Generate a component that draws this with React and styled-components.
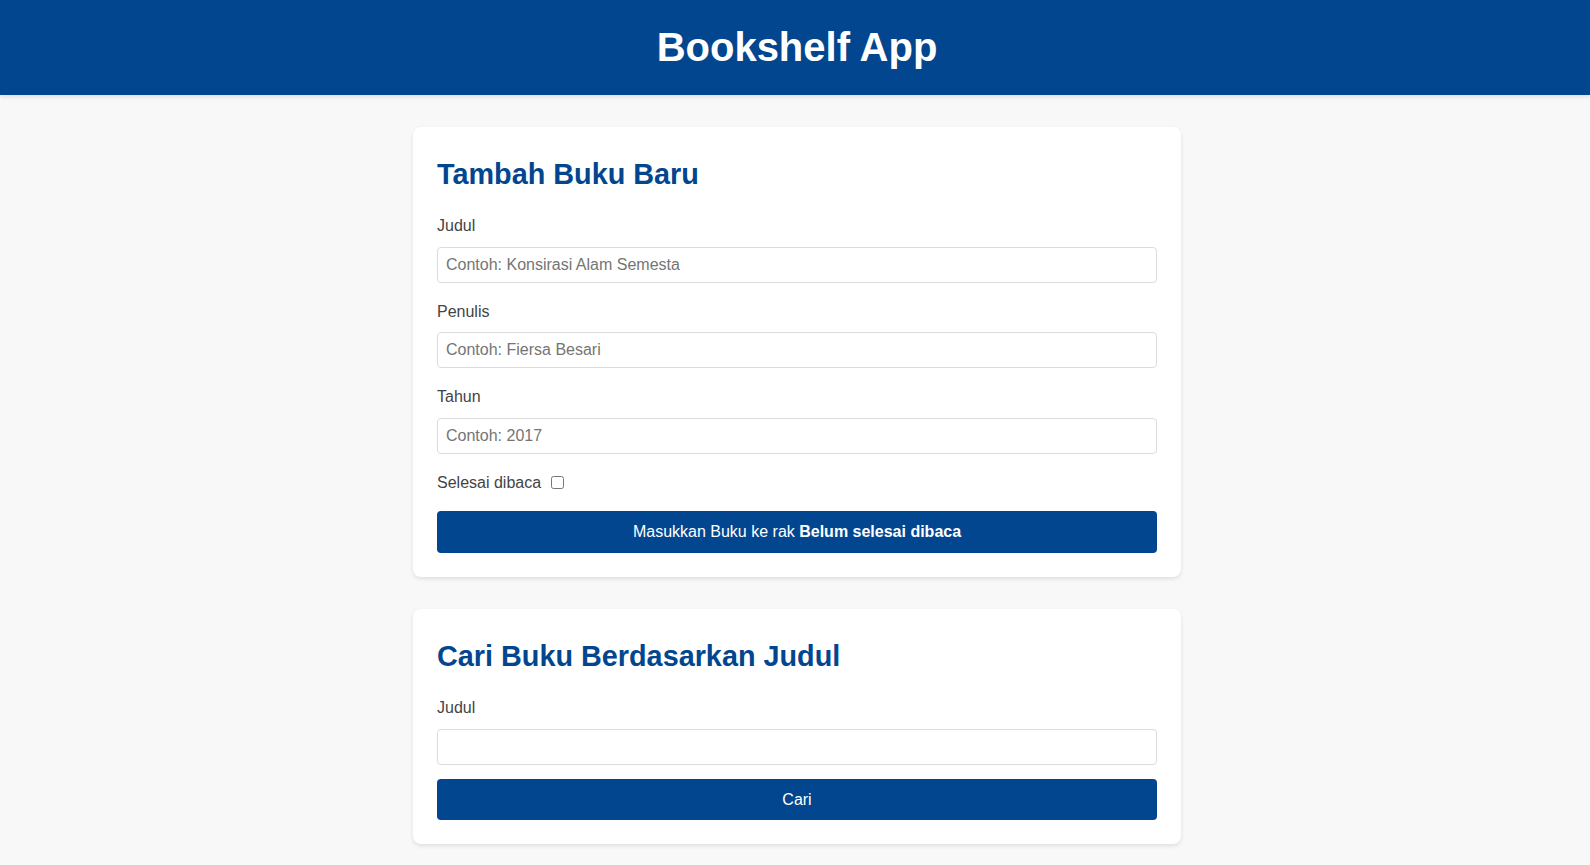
import React, { useState } from 'react';
import styled, { createGlobalStyle } from 'styled-components';

const GlobalStyle = createGlobalStyle`
  * {
    box-sizing: border-box;
  }

  body {
    margin: 0;
    font-family: "Liberation Sans", Arial, sans-serif;
    line-height: 1.6;
    background: #f8f8f8;
    color: #333;
  }
`;

const Header = styled.header`
  background: #02468f;
  color: #ffffff;
  text-align: center;
  padding: 15px 0 16px 4px;
  box-shadow: 0 2px 4px rgba(0, 0, 0, 0.1);
`;

const AppTitle = styled.h1`
  margin: 0;
  font-size: 40px;
  font-weight: 700;
`;

const Main = styled.main`
  max-width: 804px;
  margin: 0 auto;
  padding: 32px 16px 32px 20px;
  display: flex;
  flex-direction: column;
  gap: 32px;
`;

const Card = styled.section`
  background: #ffffff;
  border-radius: 8px;
  padding: 24px;
  box-shadow: 0 2px 4px rgba(0, 0, 0, 0.1);
`;

const CardTitle = styled.h2`
  margin: 0 0 16px;
  font-size: 28.8px;
  font-weight: 700;
  color: #02468f;
`;

const FormGroup = styled.div`
  margin-bottom: ${(p) => p.$space || 16}px;
`;

const Label = styled.label`
  display: block;
  margin-bottom: 8px;
  font-size: 16px;
  color: #444;
`;

const Input = styled.input`
  display: block;
  width: 100%;
  padding: 8px;
  font-family: inherit;
  font-size: 16px;
  line-height: normal;
  color: #333;
  border: 1px solid #dcdcdc;
  border-radius: 4px;
  background: #ffffff;

  &::placeholder {
    color: #757575;
  }
`;

const CheckRow = styled.div`
  display: flex;
  align-items: center;
  gap: 6px;
  margin-bottom: 16px;
  font-size: 16px;
  color: #444;
`;

const CheckBox = styled.input`
  width: 13px;
  height: 13px;
  margin: 3px 4px;
`;

const SubmitButton = styled.button`
  display: block;
  width: 100%;
  padding: 8px;
  border: none;
  border-radius: 4px;
  background: #02468f;
  color: #ffffff;
  font-family: inherit;
  font-size: 16px;
  line-height: 1.6;
  cursor: pointer;

  strong {
    font-weight: 700;
  }
`;

export default function App() {
  const [done, setDone] = useState(false);

  return (
    <>
      <GlobalStyle />
      <Header>
        <AppTitle>Bookshelf App</AppTitle>
      </Header>
      <Main>
        <Card>
          <CardTitle>Tambah Buku Baru</CardTitle>
          <form onSubmit={(e) => e.preventDefault()}>
            <FormGroup>
              <Label htmlFor="bookFormTitle">Judul</Label>
              <Input id="bookFormTitle" type="text" placeholder="Contoh: Konsirasi Alam Semesta" />
            </FormGroup>
            <FormGroup>
              <Label htmlFor="bookFormAuthor">Penulis</Label>
              <Input id="bookFormAuthor" type="text" placeholder="Contoh: Fiersa Besari" />
            </FormGroup>
            <FormGroup>
              <Label htmlFor="bookFormYear">Tahun</Label>
              <Input id="bookFormYear" type="number" placeholder="Contoh: 2017" />
            </FormGroup>
            <CheckRow>
              <label htmlFor="bookFormIsComplete">Selesai dibaca</label>
              <CheckBox
                id="bookFormIsComplete"
                type="checkbox"
                checked={done}
                onChange={(e) => setDone(e.target.checked)}
              />
            </CheckRow>
            <SubmitButton type="submit">
              Masukkan Buku ke rak <strong>{done ? 'Selesai dibaca' : 'Belum selesai dibaca'}</strong>
            </SubmitButton>
          </form>
        </Card>

        <Card>
          <CardTitle>Cari Buku Berdasarkan Judul</CardTitle>
          <form onSubmit={(e) => e.preventDefault()}>
            <FormGroup $space={14}>
              <Label htmlFor="searchBookTitle">Judul</Label>
              <Input id="searchBookTitle" type="text" />
            </FormGroup>
            <SubmitButton type="submit">Cari</SubmitButton>
          </form>
        </Card>
      </Main>
    </>
  );
}
